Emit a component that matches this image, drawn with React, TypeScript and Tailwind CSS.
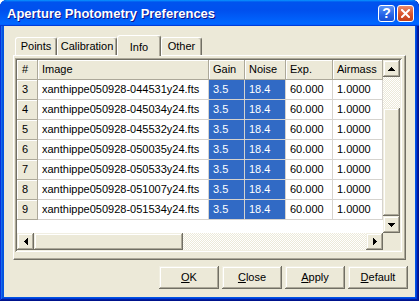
import React from "react";

const rows: [string, string][] = [
  ["3", "xanthippe050928-044531y24.fts"],
  ["4", "xanthippe050928-045034y24.fts"],
  ["5", "xanthippe050928-045532y24.fts"],
  ["6", "xanthippe050928-050035y24.fts"],
  ["7", "xanthippe050928-050533y24.fts"],
  ["8", "xanthippe050928-051007y24.fts"],
  ["9", "xanthippe050928-051534y24.fts"],
];

const btn3d =
  "bg-[#ece9d8] shadow-[inset_-1px_-1px_#716f64,inset_1px_1px_#f1efe2,inset_-2px_-2px_#aca899,inset_2px_2px_#ffffff]";

function Arrow({ dir }: { dir: "up" | "down" | "left" | "right" }) {
  if (dir === "up" || dir === "down") {
    const pts = dir === "up" ? "3.5,0 7,4 0,4" : "0,0 7,0 3.5,4";
    return (
      <svg width="7" height="4" viewBox="0 0 7 4" shapeRendering="crispEdges">
        <polygon points={pts} fill="#000" />
      </svg>
    );
  }
  const pts = dir === "left" ? "0,3.5 4,0 4,7" : "0,0 4,3.5 0,7";
  return (
    <svg width="4" height="7" viewBox="0 0 4 7" shapeRendering="crispEdges">
      <polygon points={pts} fill="#000" />
    </svg>
  );
}

function SBtn({ dir }: { dir: "up" | "down" | "left" | "right" }) {
  return (
    <div className={`w-[17px] h-[17px] shrink-0 flex items-center justify-center ${btn3d}`}>
      <Arrow dir={dir} />
    </div>
  );
}

const hatch =
  "bg-[image:repeating-conic-gradient(#ece9d8_0%_25%,#ffffff_0%_50%)] bg-[length:2px_2px]";

function HeadCell({ children, pl = "pl-[4px]" }: { children: React.ReactNode; pl?: string }) {
  return (
    <div
      className={`h-[20px] flex items-center ${pl} bg-[#ece9d8] border-r border-b border-[#aca899] shadow-[inset_1px_1px_#ffffff] whitespace-nowrap overflow-hidden`}
    >
      {children}
    </div>
  );
}

function DataCell({ children, sel = false }: { children: React.ReactNode; sel?: boolean }) {
  return (
    <div
      className={`h-[20px] flex items-center pl-[4px] border-r border-b border-[#d6d3ce] whitespace-nowrap overflow-hidden ${
        sel ? "bg-[#316ac5] text-white" : "bg-white text-black"
      }`}
    >
      {children}
    </div>
  );
}

function Tab({ label, w, selected = false }: { label: string; w: string; selected?: boolean }) {
  if (selected) {
    return (
      <div
        className={`${w} h-[21px] -mb-[1px] relative z-10 bg-[#ece9d8] rounded-t-[3px] border-t border-l border-white border-r border-r-[#716f64] shadow-[inset_-1px_0_#aca899] flex justify-center pt-[3px] text-[11px]`}
      >
        {label}
      </div>
    );
  }
  return (
    <div
      className={`${w} h-[18px] bg-[#ece9d8] rounded-t-[3px] border-t border-l border-white border-r border-r-[#716f64] shadow-[inset_-1px_0_#aca899] flex items-center justify-center text-[11px]`}
    >
      {label}
    </div>
  );
}

function PushButton({ u, rest }: { u: string; rest: string }) {
  return (
    <div
      className={`w-[60px] h-[23px] flex items-center justify-center text-[11px] text-black ${btn3d}`}
    >
      <span>
        <u>{u}</u>
        {rest}
      </span>
    </div>
  );
}

export default function App() {
  return (
    <div className="w-[419px] h-[301px] bg-white font-['Liberation_Sans',Arial,sans-serif]">
      <div className="w-[419px] h-[301px] flex flex-col rounded-t-[7px] bg-[#0054e3] shadow-[inset_-1px_-1px_#00138c,inset_1px_1px_#0831d9,inset_-2px_-2px_#001ea0,inset_2px_2px_#166aee,inset_-3px_-3px_#003bda,inset_3px_3px_#0855dd]">
        {/* Title bar */}
        <div className="h-[26px] shrink-0 flex items-center pl-[7px] pr-[5px] rounded-t-[7px] bg-[linear-gradient(180deg,#0997ff,#0053ee_8%,#0050ee_40%,#0066ff_88%,#0066ff_93%,#005bff_95%,#003dd7_96%,#003dd7)]">
          <span className="flex-1 text-white font-bold text-[13px] leading-none pt-[1px] [text-shadow:1px_1px_#0f1089]">
            Aperture Photometry Preferences
          </span>
          <div className="flex gap-[2px]">
            <div className="w-[17px] h-[17px] rounded-[3px] border border-white bg-[linear-gradient(180deg,#5a95f8,#2563e8_60%,#1a4fd0)] flex items-center justify-center text-white font-bold text-[14px] leading-none">
              ?
            </div>
            <div className="w-[17px] h-[17px] rounded-[3px] border border-white bg-[linear-gradient(180deg,#e98b6b,#d9532c_55%,#c2401c)] flex items-center justify-center">
              <svg width="9" height="9" viewBox="0 0 9 9">
                <path d="M1 1 L8 8 M8 1 L1 8" stroke="#fff" strokeWidth="2" strokeLinecap="square" />
              </svg>
            </div>
          </div>
        </div>

        {/* Client frame */}
        <div className="flex-1 flex flex-col px-[4px] pb-[4px]">
          <div className="flex-1 bg-[#ece9d8] flex flex-col text-black">
            {/* Tabs */}
            <div className="h-[20px] mt-[9px] ml-[11px] flex items-end">
              <Tab label="Points" w="w-[42px]" />
              <Tab label="Calibration" w="w-[60px]" />
              <Tab label="Info" w="w-[44px]" selected />
              <Tab label="Other" w="w-[41px]" />
            </div>

            {/* Panel */}
            <div className="ml-[9px] w-[393px] h-[205px] border-t border-l border-white border-r border-b border-r-[#716f64] border-b-[#716f64] shadow-[inset_-1px_-1px_#aca899] pt-[2px] pl-[1px]">
              {/* Grid */}
              <div className="w-[387px] h-[194px] p-[2px] shadow-[inset_1px_1px_#aca899,inset_-1px_-1px_#ffffff,inset_2px_2px_#716f64,inset_-2px_-2px_#f1efe2]">
                <div className="w-[383px] h-[190px] flex flex-col">
                  <div className="flex h-[173px]">
                    <div className="w-[366px] h-[173px] bg-white overflow-hidden text-[11px]">
                      <div className="grid grid-cols-[21px_171px_36px_41px_47px_50px]">
                        <HeadCell pl="pl-[5px]">#</HeadCell>
                        <HeadCell>Image</HeadCell>
                        <HeadCell>Gain</HeadCell>
                        <HeadCell>Noise</HeadCell>
                        <HeadCell>Exp.</HeadCell>
                        <HeadCell>Airmass</HeadCell>
                        {rows.map(([n, name]) => (
                          <React.Fragment key={n}>
                            <HeadCell pl="pl-[5px]">{n}</HeadCell>
                            <DataCell>{name}</DataCell>
                            <DataCell sel>3.5</DataCell>
                            <DataCell sel>18.4</DataCell>
                            <DataCell>60.000</DataCell>
                            <DataCell>1.0000</DataCell>
                          </React.Fragment>
                        ))}
                      </div>
                    </div>
                    {/* Vertical scrollbar */}
                    <div className="w-[17px] h-[173px] flex flex-col">
                      <SBtn dir="up" />
                      <div className={`h-[31px] ${hatch}`} />
                      <div className={`h-[108px] ${btn3d}`} />
                      <SBtn dir="down" />
                    </div>
                  </div>
                  <div className="flex h-[17px]">
                    <SBtn dir="left" />
                    <div className={`w-[149px] h-[17px] ${btn3d}`} />
                    <div className={`w-[183px] h-[17px] ${hatch}`} />
                    <SBtn dir="right" />
                    <div className="w-[17px] h-[17px] bg-[#ece9d8]" />
                  </div>
                </div>
              </div>
            </div>

            {/* Buttons */}
            <div className="mt-[6px] pl-[155px] flex gap-[3px]">
              <PushButton u="O" rest="K" />
              <PushButton u="C" rest="lose" />
              <PushButton u="A" rest="pply" />
              <PushButton u="D" rest="efault" />
            </div>
          </div>
        </div>
      </div>
    </div>
  );
}
